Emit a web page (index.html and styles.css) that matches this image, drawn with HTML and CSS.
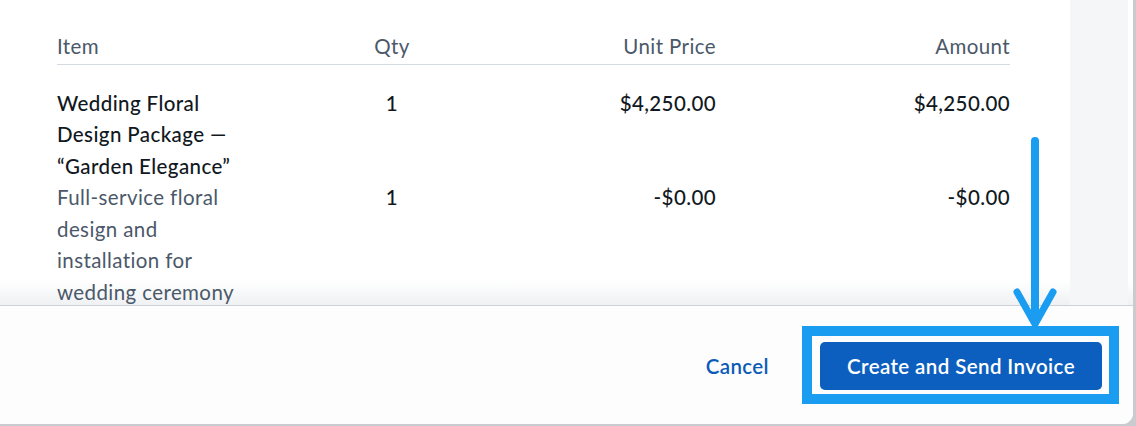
FILE: index.html
```html
<!DOCTYPE html>
<html lang="en">
<head>
  <meta charset="UTF-8" />
  <title>Create Invoice</title>
  <link rel="stylesheet" href="styles.css">
</head>
<body>

<div class="modal">
  <div class="modal-body">
    <div class="content">
      <table class="items">
        <colgroup>
          <col class="col-item">
          <col class="col-qty">
          <col class="col-price">
          <col class="col-amount">
        </colgroup>
        <thead>
          <tr>
            <th class="left">Item</th>
            <th class="center">Qty</th>
            <th class="right">Unit Price</th>
            <th class="right">Amount</th>
          </tr>
        </thead>
        <tbody>
          <tr class="first">
            <td class="name">Wedding Floral Design Package — “Garden Elegance”</td>
            <td class="center">1</td>
            <td class="right">$4,250.00</td>
            <td class="right">$4,250.00</td>
          </tr>
          <tr>
            <td class="desc">Full-service floral design and installation for wedding ceremony</td>
            <td class="center">1</td>
            <td class="right">-$0.00</td>
            <td class="right">-$0.00</td>
          </tr>
        </tbody>
      </table>
    </div>
    <div class="side"></div>
  </div>

  <div class="modal-footer">
    <button class="link-btn">Cancel</button>
    <button class="primary-btn">Create and Send Invoice</button>
  </div>

  <!-- annotation over the screenshot -->
  <div class="highlight"></div>
  <svg class="arrow" width="48" height="200" viewBox="0 0 48 200">
    <path d="M24 8 V188" stroke="#1a9cf0" stroke-width="8" stroke-linecap="round" fill="none"/>
    <path d="M6 159 L24 191 L42 159" stroke="#1a9cf0" stroke-width="7" stroke-linecap="round" fill="none"/>
  </svg>
</div>

</body>
</html>
```

FILE: styles.css
```css
* { box-sizing: border-box; }
body {
  margin: 0;
  background: #c9cbcf;
  font-family: Lato, 'Liberation Sans', sans-serif;
  width: 1136px;
  height: 426px;
  overflow: hidden;
}
.modal {
  position: relative;
  width: 1133px;
  height: 424px;
  background: #fff;
  border-bottom-right-radius: 11px;
  overflow: hidden;
  display: flex;
  flex-direction: column;
}
.modal-body {
  height: 305px;
  display: flex;
  overflow: hidden;
  background: linear-gradient(to bottom, #fff 280px, #eff1f3 305px);
}
.content {
  width: 1070px;
  padding: 0 60px 0 57px;
}
.side {
  width: 58px;
  background: #f5f6f8;
}
.items {
  width: 953px;
  border-collapse: collapse;
  table-layout: fixed;
  font-size: 20.5px;
  letter-spacing: 0.4px;
  line-height: 31.5px;
}
.col-item { width: 200px; }
.col-qty { width: 270px; }
.col-price { width: 189px; }
.col-amount { width: 294px; }
th {
  font-weight: 400;
  color: #4b5869;
  padding: 31px 0 1px;
  border-bottom: 1px solid #d4dae2;
}
td {
  vertical-align: top;
  color: #111821;
  padding: 0;
}
.items tr.first td { padding-top: 23px; }
td.name { font-weight: 500; padding-right: 10px; }
td.desc { color: #4b5869; padding-right: 10px; }
.left { text-align: left; }
.center { text-align: center; }
.right { text-align: right; }
tbody td.center, tbody td.right { font-weight: 500; }

.modal-footer {
  flex: 1;
  border-top: 1px solid #cdd2d8;
  background: #fdfdfd;
  display: flex;
  justify-content: flex-end;
  align-items: center;
  gap: 51px;
  padding: 2px 31px 0 0;
}
.link-btn {
  border: none;
  background: none;
  color: #0b5cb8;
  font-family: inherit;
  font-size: 20.5px;
  letter-spacing: 0.4px;
  font-weight: 600;
  padding: 0;
  cursor: pointer;
}
.primary-btn {
  width: 282px;
  height: 48px;
  border: none;
  border-radius: 5px;
  background: #0c5fbf;
  color: #fff;
  font-family: inherit;
  font-size: 20.5px;
  letter-spacing: 0.4px;
  font-weight: 600;
  cursor: pointer;
}
.highlight {
  position: absolute;
  left: 802px;
  top: 326px;
  width: 317px;
  height: 78px;
  border: 10px solid #1a9cf0;
}
.arrow {
  position: absolute;
  left: 1011px;
  top: 133px;
}
```
